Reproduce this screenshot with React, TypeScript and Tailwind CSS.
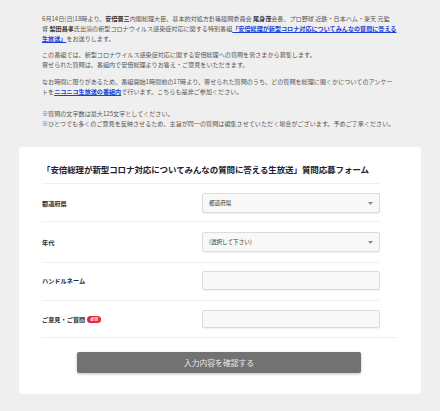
import type { JSX, ReactNode } from 'react';

const font = { fontFamily: '"Noto Sans CJK JP", "Noto Sans", sans-serif' };

function Lk({ children, bold = true }: { children: ReactNode; bold?: boolean }): JSX.Element {
  return (
    <a href="#" className={`text-[#1b3fd6] underline ${bold ? 'font-bold' : ''}`}>
      {children}
    </a>
  );
}

function Caret(): JSX.Element {
  return (
    <svg width="5" height="3" viewBox="0 0 5 3" className="shrink-0">
      <path d="M0 0 L5 0 L2.5 3 Z" fill="#8a8a8a" />
    </svg>
  );
}

function SelectBox({ value }: { value: string }): JSX.Element {
  return (
    <div className="flex h-[20px] w-[178px] items-center justify-between rounded-[2px] border border-[#dcdcdc] bg-[#f8f8f8] pl-[6px] pr-[6px] text-[5.6px] text-[#333] shadow-[0_1px_1px_rgba(0,0,0,0.06)]">
      <span>{value}</span>
      <Caret />
    </div>
  );
}

function InputBox({ h }: { h: number }): JSX.Element {
  return (
    <div
      className="w-[178px] rounded-[2px] border border-[#dcdcdc] bg-[#f8f8f8] shadow-[0_1px_1px_rgba(0,0,0,0.06)]"
      style={{ height: h }}
    />
  );
}

function Row({
  label,
  badge,
  pt,
  pb,
  last,
  children,
}: {
  label: string;
  badge?: boolean;
  pt: string;
  pb: string;
  last?: boolean;
  children: ReactNode;
}): JSX.Element {
  return (
    <div className={`grid grid-cols-[160px_178px] ${pt} ${pb} ${last ? '' : 'border-b border-[#f0f0f0]'}`}>
      <div className="flex items-center gap-[2px] pt-[1px] text-[6.2px] font-bold leading-[10px] text-[#2a2a2a]">
        <span>{label}</span>
        {badge && (
          <span className="rounded-full bg-[#e8242c] px-[3px] text-[4px] leading-[7px] text-white">
            必須
          </span>
        )}
      </div>
      <div>{children}</div>
    </div>
  );
}

// ※ はカラー絵文字に落ちないよう text 表示を指定
const Mark = (): JSX.Element => <span className="[font-variant-emoji:text]">※</span>;

export default function App(): JSX.Element {
  return (
    <div className="min-h-[411px] w-[440px] bg-[#efefef] pt-[14px] pb-[16px]" style={font}>
      <div className="ml-[42px] text-[6.1px] leading-[10px] text-[#555]">
        <p className="whitespace-nowrap">
          6月14日(日)18時より、<b className="text-[#333]">安倍晋三</b>内閣総理大臣、基本的対処方針等諮問委員会{' '}
          <b className="text-[#333]">尾身茂</b>会長、プロ野球 近鉄・日本ハム・楽天 元監
          <br />督 <b className="text-[#333]">梨田昌孝</b>氏出演の新型コロナウイルス感染症対応に関する特別番組
          <Lk>「安倍総理が新型コロナ対応についてみんなの質問に答える</Lk>
          <br />
          <Lk>生放送」</Lk>をお送りします。
        </p>
        <p className="mt-[6px] whitespace-nowrap">
          この番組では、新型コロナウイルス感染症対応に関する安倍総理への質問を皆さまから募集します。
          <br />
          寄せられた質問は、番組内で安倍総理よりお答え・ご意見をいただきます。
        </p>
        <p className="mt-[7px] whitespace-nowrap">
          なお時間に限りがあるため、番組開始1時間前の17時より、寄せられた質問のうち、どの質問を総理に聞くかについてのアンケー
          <br />
          トを<Lk>ニコニコ生放送の番組内</Lk>で行います。こちらも是非ご参加ください。
        </p>
        <p className="mt-[12px] whitespace-nowrap">
          <Mark />質問の文字数は最大125文字としてください。
          <br />
          <Mark />ひとつでも多くのご意見を反映させるため、主旨が同一の質問は編集させていただく場合がございます。予めご了承ください。
        </p>
      </div>

      <div className="ml-[19px] mt-[18px] w-[402px] rounded-[3px] bg-white pl-[23px] pr-[24px] pt-[16px] pb-[21px]">
        <div className="w-[338px]">
          <h2 className="border-b border-[#f0f0f0] pb-[8px] text-[8.5px] font-bold leading-[12px] tracking-[-0.1px] text-[#1c2030]">
            「安倍総理が新型コロナ対応についてみんなの質問に答える生放送」質問応募フォーム
          </h2>
          <Row label="都道府県" pt="pt-[9px]" pb="pb-[8px]">
            <SelectBox value="都道府県" />
          </Row>
          <Row label="年代" pt="pt-[10px]" pb="pb-[10px]">
            <SelectBox value="(選択して下さい)" />
          </Row>
          <Row label="ハンドルネーム" pt="pt-[8px]" pb="pb-[10px]">
            <InputBox h={19} />
          </Row>
          <Row label="ご意見・ご質問" badge pt="pt-[9px]" pb="pb-[9px]" last>
            <InputBox h={18} />
          </Row>
        </div>
        <div className="-ml-[1px] h-px w-[356px] bg-[#f0f0f0]" />
        <div className="mt-[14px] flex justify-center">
          <button
            type="button"
            className="-ml-[1px] h-[21px] w-[284px] rounded-[2px] bg-[#727272] text-[7.8px] text-[#eaeaea] shadow-[0_1px_3px_rgba(0,0,0,0.25)]"
          >
            入力内容を確認する
          </button>
        </div>
      </div>
    </div>
  );
}
